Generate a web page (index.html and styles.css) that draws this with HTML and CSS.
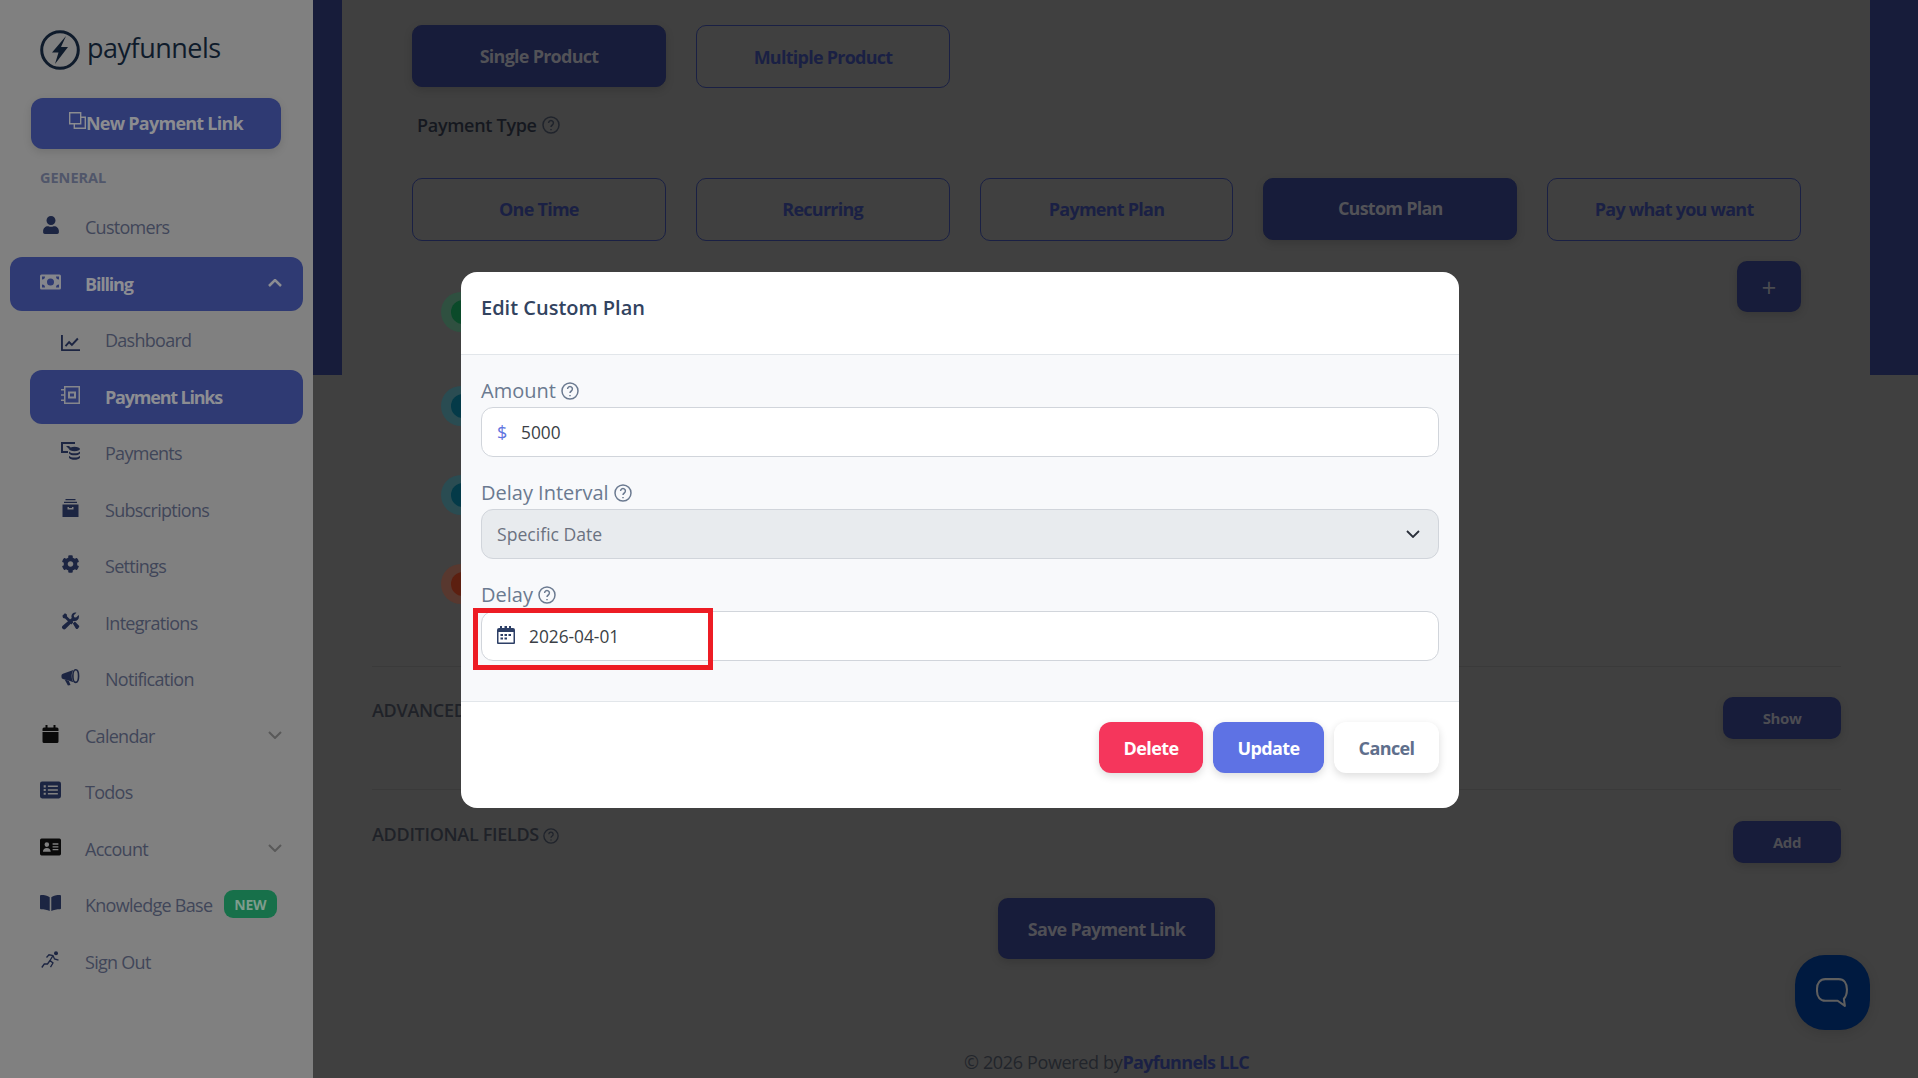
FILE: index.html
```html
<!DOCTYPE html>
<html lang="en">
<head>
<meta charset="utf-8">
<title>Payfunnels - Edit Custom Plan</title>
<link rel="stylesheet" href="styles.css">
</head>
<body>
<svg class="sprite" aria-hidden="true">
  <symbol id="i-user" viewBox="0 0 448 512"><path d="M224 256c70.700 0 128-57.300 128-128S294.700 0 224 0 96 57.300 96 128s57.300 128 128 128zm89.600 32h-16.700c-22.200 10.200-46.900 16-72.900 16s-50.600-5.800-72.900-16h-16.700C60.200 288 0 348.200 0 422.400V464c0 26.500 21.500 48 48 48h352c26.500 0 48-21.500 48-48v-41.600c0-74.200-60.200-134.400-134.400-134.400z"/></symbol>
  <symbol id="i-money" viewBox="0 0 21 15"><path fill-rule="evenodd" d="M1.500 0h18A1.500 1.500 0 0 1 21 1.500v12a1.500 1.500 0 0 1-1.500 1.500h-18A1.500 1.500 0 0 1 0 13.500v-12A1.500 1.500 0 0 1 1.500 0zM10.500 4a3.500 3.500 0 1 0 0 7 3.500 3.500 0 0 0 0-7zM2 2v3a3 3 0 0 0 3-3zm14 0a3 3 0 0 0 3 3V2zM2 10v3h3a3 3 0 0 0-3-3zm17 0a3 3 0 0 0-3 3h3z"/></symbol>
  <symbol id="i-chart" viewBox="0 0 20 17"><path d="M0 0h2v15h18v2H1a1 1 0 0 1-1-1z"/><path d="M4 11l4.500-5 3 3L17 3l1.500 1.500L11.500 12l-3-3-3 3.500z"/></symbol>
  <symbol id="i-book" viewBox="0 0 19 18"><path fill-rule="evenodd" d="M3 0h16v18H3v-3H0v-1.500h3v-3.750H0v-1.500h3V4.500H0V3h3zm1.500 1.500v15h13v-15zM7 5.500h8v7H7zm2 2v3h4v-3z"/></symbol>
  <symbol id="i-pay" viewBox="0 0 19 18"><path d="M0 0h14v2H2v7h5v2H0z"/><path d="M5 4l3 0 2 2-2 1z"/><ellipse cx="13.500" cy="7" rx="5.500" ry="2.200"/><path d="M8 9.500c1 1.300 3.200 1.800 5.500 1.800s4.500-.5 5.500-1.800v2c-1 1.300-3.200 1.800-5.500 1.800S9 12.800 8 11.500z"/><path d="M8 13.800c1 1.300 3.200 1.800 5.500 1.800s4.500-.5 5.500-1.800v1.900c-1 1.500-3.200 2.100-5.500 2.100S9 17.200 8 15.700z"/></symbol>
  <symbol id="i-archive" viewBox="0 0 16 18"><path fill-rule="evenodd" d="M3 0h10v1.200H3zM1.500 2.700h13v1.200h-13zM0 5.500h16V18H0zM5 8v2.500h6V8H9.500v1h-3V8z"/></symbol>
  <symbol id="i-cog" viewBox="0 0 512 512"><path d="M487.400 315.700l-42.600-24.600c4.300-23.200 4.300-47 0-70.200l42.600-24.600c4.900-2.800 7.100-8.600 5.500-14-11.100-35.600-30-67.800-54.700-94.600-3.800-4.100-10-5.100-14.800-2.300L380.800 110c-17.900-15.400-38.500-27.300-60.800-35.100V25.800c0-5.600-3.900-10.500-9.400-11.700-36.700-8.200-74.300-7.800-109.200 0-5.500 1.200-9.400 6.100-9.400 11.700V75c-22.200 7.900-42.800 19.800-60.800 35.100L88.700 85.500c-4.900-2.800-11-1.900-14.800 2.300-24.700 26.700-43.600 58.900-54.700 94.600-1.700 5.400.6 11.200 5.500 14L67.300 221c-4.300 23.200-4.300 47 0 70.200l-42.600 24.600c-4.900 2.800-7.100 8.600-5.500 14 11.100 35.600 30 67.800 54.700 94.600 3.800 4.100 10 5.100 14.800 2.300l42.600-24.600c17.900 15.400 38.500 27.300 60.800 35.100v49.200c0 5.600 3.900 10.500 9.400 11.700 36.700 8.200 74.300 7.800 109.200 0 5.500-1.200 9.400-6.100 9.400-11.700v-49.200c22.200-7.900 42.800-19.800 60.800-35.100l42.600 24.600c4.900 2.800 11 1.900 14.800-2.300 24.700-26.700 43.600-58.900 54.700-94.600 1.500-5.500-.7-11.300-5.600-14.100zM256 336c-44.100 0-80-35.900-80-80s35.900-80 80-80 80 35.900 80 80-35.900 80-80 80z"/></symbol>
  <symbol id="i-tools" viewBox="0 0 20 20"><path d="M1 4.200L3.800 1.400l2 1.200.4 2.300 6.900 6.900-2.200 2.200-6.900-6.900-2.300-.4z"/><path d="M19.200 3.200l-3 3-2.200-.3-.4-2.200 3-3c-2.600-.9-5.800 1-5.600 4.300 0 .6.200 1.200.4 1.700L1.300 15.300a2.300 2.300 0 0 0 3.300 3.300l8.700-8.700c3.700 1.100 7-2.300 5.900-6.700z"/><path d="M12.600 12.900l2.300-2.300 4.300 4.300a1.700 1.700 0 0 1 0 2.400l-.9.900a1.700 1.700 0 0 1-2.400 0z"/></symbol>
  <symbol id="i-horn" viewBox="0 0 20 18"><path d="M.5 7.500a2 2 0 0 1 1.500-2L13 1.500c-1.200 2-1.800 4.200-1.800 6.500s.6 4.500 1.800 6.500l-5-1.800-6-1.700a2 2 0 0 1-1.500-2z"/><path d="M3.800 11.500l4.400 1.500 1.800 4.300-2.700.7z"/><ellipse cx="15.500" cy="8" rx="3" ry="6.700" fill="none" stroke="currentColor" stroke-width="1.700"/></symbol>
  <symbol id="i-cal" viewBox="0 0 16 18"><path d="M3 0h2v2.500h6V0h2v2.500h1.500A1.500 1.500 0 0 1 16 4v2H0V4a1.500 1.500 0 0 1 1.500-1.500H3zM0 7h16v9.500a1.500 1.500 0 0 1-1.500 1.500h-13A1.500 1.500 0 0 1 0 16.500z"/></symbol>
  <symbol id="i-list" viewBox="0 0 20 16"><path fill-rule="evenodd" d="M2 0h16a2 2 0 0 1 2 2v12a2 2 0 0 1-2 2H2a2 2 0 0 1-2-2V2a2 2 0 0 1 2-2zM3.500 3.500v2h2v-2zm4 .3v1.400H17V3.800zM3.500 7v2h2V7zm4 .3v1.400H17V7.300zm-4 3.200v2h2v-2zm4 .3v1.400H17v-1.400z"/></symbol>
  <symbol id="i-id" viewBox="0 0 20 16"><path fill-rule="evenodd" d="M1.500 0h17A1.500 1.500 0 0 1 20 1.500v13a1.500 1.500 0 0 1-1.500 1.500h-17A1.500 1.500 0 0 1 0 14.500v-13A1.500 1.500 0 0 1 1.500 0zM6.500 3.500a2.200 2.200 0 1 0 0 4.400 2.200 2.200 0 0 0 0-4.400zM2.800 12.500h7.400c0-2-1.500-3.600-3.700-3.600s-3.700 1.600-3.700 3.600zM12 4.500v1.300h5.500V4.500zM12 7.200v1.300h5.500V7.200zM12 9.900v1.300h5.500V9.900z"/></symbol>
  <symbol id="i-open" viewBox="0 0 21 16"><path d="M1 0c3.500 0 6.700.6 8.700 2.300V16C7.500 14.800 4 14.300 1 14.300a1 1 0 0 1-1-1V1a1 1 0 0 1 1-1zM20 0c-3.500 0-6.700.6-8.700 2.300V16c2.200-1.200 5.700-1.700 8.700-1.700a1 1 0 0 0 1-1V1a1 1 0 0 0-1-1z"/></symbol>
  <symbol id="i-run" viewBox="0 0 19 18"><circle cx="15" cy="2.200" r="2"/><path d="M5.500 6.500L8 3.800l4 .8 1.500 3.400 4 1.100M12 4.600L9 9.500l3 2.500-2.500 4.200M9 9.500L6.500 13H3.300L.8 16.500" fill="none" stroke="currentColor" stroke-width="1.300"/></symbol>
  <symbol id="i-copy" viewBox="0 0 17 17"><path d="M.7.700h11v11H.7zM5.300 11.700v4.600h11v-11h-4.600" fill="none" stroke="currentColor" stroke-width="1.400"/></symbol>
  <symbol id="i-date" viewBox="0 0 18 18"><path fill-rule="evenodd" d="M3 0h2v2h2.500V0h2.500v2h2V0h2v2h2a2 2 0 0 1 2 2v13a1 1 0 0 1-1 1H1a1 1 0 0 1-1-1V4a2 2 0 0 1 2-2h1zM1.500 6v10.500h15V6zM3.500 8h2.500v2H3.500zM7.500 8h2.500v2H7.500zM11.500 8h2.500v2h-2.500zM3.500 11.500h2.500v2H3.500zM7.500 11.500h2.500v2H7.500z"/></symbol>
  <symbol id="i-help" viewBox="0 0 18 18"><circle cx="9" cy="9" r="8"/><path d="M6.600 7a2.400 2.400 0 1 1 3.700 2c-.9.600-1.300 1-1.300 2"/><path d="M9 13v1.200"/></symbol>
</svg>

<aside class="sidebar">
  <div class="logo">
    <svg class="logo-mark" viewBox="0 0 40 40"><circle cx="20" cy="20" r="18.300" fill="none" stroke="currentColor" stroke-width="3"/><path d="M26 6L12 22.500h6.500L15 34l13-17h-7z" fill="currentColor"/></svg>
    <span class="logo-text">payfunnels</span>
  </div>
  <div class="new-link"><svg class="copy-icon"><use href="#i-copy"/></svg>New Payment Link</div>
  <div class="nav-heading">GENERAL</div>
  <nav class="nav">
    <div class="nav-row"><svg class="ic ic-user"><use href="#i-user"/></svg>Customers</div>
    <div class="nav-row is-active"><svg class="ic"><use href="#i-money"/></svg>Billing<svg class="chev" viewBox="0 0 14 8"><path d="M1 7l6-6 6 6"/></svg></div>
    <div class="nav-row is-sub"><svg class="ic ic-low"><use href="#i-chart"/></svg>Dashboard</div>
    <div class="nav-row is-sub is-active"><svg class="ic"><use href="#i-book"/></svg>Payment Links</div>
    <div class="nav-row is-sub"><svg class="ic"><use href="#i-pay"/></svg>Payments</div>
    <div class="nav-row is-sub"><svg class="ic"><use href="#i-archive"/></svg>Subscriptions</div>
    <div class="nav-row is-sub"><svg class="ic"><use href="#i-cog"/></svg>Settings</div>
    <div class="nav-row is-sub"><svg class="ic"><use href="#i-tools"/></svg>Integrations</div>
    <div class="nav-row is-sub"><svg class="ic"><use href="#i-horn"/></svg>Notification</div>
    <div class="nav-row"><svg class="ic ic-black"><use href="#i-cal"/></svg>Calendar<svg class="chev" viewBox="0 0 14 8"><path d="M1 1l6 6 6-6"/></svg></div>
    <div class="nav-row"><svg class="ic"><use href="#i-list"/></svg>Todos</div>
    <div class="nav-row"><svg class="ic ic-black"><use href="#i-id"/></svg>Account<svg class="chev" viewBox="0 0 14 8"><path d="M1 1l6 6 6-6"/></svg></div>
    <div class="nav-row"><svg class="ic"><use href="#i-open"/></svg>Knowledge Base<span class="badge">NEW</span></div>
    <div class="nav-row"><svg class="ic"><use href="#i-run"/></svg>Sign Out</div>
  </nav>
</aside>

<main class="main">
  <div class="card">
    <section class="builder">
      <div class="btn-row btn-row-product">
        <div class="tile is-on">Single Product</div>
        <div class="tile">Multiple Product</div>
      </div>
      <div class="type-label">Payment Type <svg class="help help-dark"><use href="#i-help"/></svg></div>
      <div class="btn-row btn-row-plan">
        <div class="tile">One Time</div>
        <div class="tile">Recurring</div>
        <div class="tile">Payment Plan</div>
        <div class="tile is-on">Custom Plan</div>
        <div class="tile">Pay what you want</div>
      </div>
      <div class="plans">
        <div class="steps">
          <span class="step step-green"></span>
          <span class="step step-teal step-far"></span>
          <span class="step step-teal"></span>
          <span class="step step-red"></span>
        </div>
        <div class="plus">+</div>
      </div>
    </section>
    <section class="panel">
      <span class="panel-title">ADVANCED</span>
      <div class="mini mini-show">Show</div>
    </section>
    <section class="panel">
      <span class="panel-title">ADDITIONAL FIELDS <svg class="help help-dark help-small"><use href="#i-help"/></svg></span>
      <div class="mini mini-add">Add</div>
    </section>
    <div class="save">Save Payment Link</div>
    <footer class="foot">© 2026 Powered by<strong>Payfunnels LLC</strong></footer>
  </div>
</main>

<div class="chat"><svg viewBox="0 0 32 30"><path d="M9 2h13c5 0 8 4 8 10 0 4-1 7-3 9l1 7-7-5H9c-5 0-8-4-8-9v-3c0-5 3-9 8-9z"/></svg></div>

<div class="modal">
  <header class="modal-head">Edit Custom Plan</header>
  <div class="modal-body">
    <div class="field">
      <label class="field-label">Amount <svg class="help"><use href="#i-help"/></svg></label>
      <div class="control"><span class="dollar">$</span>5000</div>
    </div>
    <div class="field">
      <label class="field-label">Delay Interval <svg class="help"><use href="#i-help"/></svg></label>
      <div class="control control-select">Specific Date<svg class="select-chev" viewBox="0 0 14 8"><path d="M1 1l6 6 6-6"/></svg></div>
    </div>
    <div class="field">
      <label class="field-label">Delay <svg class="help"><use href="#i-help"/></svg></label>
      <div class="control"><svg class="date-icon"><use href="#i-date"/></svg>2026-04-01</div>
    </div>
  </div>
  <footer class="modal-foot">
    <div class="act act-delete">Delete</div>
    <div class="act act-update">Update</div>
    <div class="act act-cancel">Cancel</div>
  </footer>
  <div class="highlight"></div>
</div>
</body>
</html>
```

FILE: styles.css
```css
* { box-sizing: border-box; }
html, body { margin: 0; height: 100%; }
body {
  position: relative;
  display: flex;
  width: 1918px;
  height: 1078px;
  overflow: hidden;
  background: #404040;
  font-family: "Open Sans", sans-serif;
}
.sprite { position: absolute; width: 0; height: 0; }

/* Sidebar */
.sidebar {
  flex: 0 0 313px;
  background: #808080;
  padding: 30px 10px 0;
  color: #404659;
}
.logo { display: flex; align-items: center; height: 40px; margin-left: 30px; color: #0f1b2b; }
.logo-mark { width: 40px; height: 40px; }
.logo-text { margin-left: 7px; margin-top: -6px; font-size: 27px; font-weight: 400; letter-spacing: -.5px; }
.new-link {
  display: flex; align-items: center; justify-content: center;
  width: 250px; height: 51px; margin: 28px 0 0 21px;
  padding-bottom: 1px;
  border-radius: 12px;
  background: #2f3a73;
  color: #8b8c90;
  font-size: 18px; font-weight: 700; letter-spacing: -.75px;
  box-shadow: 0 3px 8px rgba(0,0,0,.12);
}
.copy-icon { width: 17px; height: 17px; margin-top: -5px; }
.nav-heading { height: 19px; margin: 19px 0 13px 30px; color: #50566a; font-size: 14.500px; font-weight: 700; line-height: 19px; }
.nav { display: flex; flex-direction: column; gap: 2.500px; }
.nav-row {
  position: relative;
  display: flex; align-items: center;
  height: 54px;
  padding-left: 30px;
  border-radius: 12px;
  font-size: 18px; letter-spacing: -.72px;
}
.nav-row.is-sub { margin-left: 20px; }
.nav-row.is-active { background: #2f3a73; color: #8c8d92; font-weight: 700; letter-spacing: -1.200px; }
.ic { flex: none; width: 21px; height: 18px; margin: -4px 24px 0 0; fill: #1c2542; color: #1c2542; }
.is-active .ic { fill: #85868c; color: #85868c; }
.is-sub .ic { margin-right: 25px; margin-left: 1px; width: 19px; }
.is-sub .ic-low { margin-top: 5px; }
.ic-user { width: 16px; margin-left: 3px; margin-right: 26px; }
.ic-black { fill: #0a0a0a; }
.chev { position: absolute; right: 21px; top: 22px; width: 14px; height: 8px; fill: none; stroke: #595959; stroke-width: 2; }
.is-active .chev { stroke: #8c8d92; stroke-width: 2.500; }
.badge {
  display: flex; align-items: center; justify-content: center;
  width: 53px; height: 28px; margin-left: 11.500px; margin-top: -2px;
  border-radius: 9px;
  background: #17704a; color: #7e9c8d;
  font-size: 14px; font-weight: 700; letter-spacing: -.2px;
}

/* Main area */
.main {
  flex: 1;
  padding: 0 48px 0 29px;
  background: linear-gradient(#171c3a, #171c3a) no-repeat top / 100% 375px, #404040;
}
.card { height: 100%; padding: 0 29px 0 30px; background: #404040; }
.builder { height: 666px; padding: 25px 40px 0; overflow: hidden; }
.btn-row { display: flex; gap: 30px; }
.btn-row .tile { flex: 1; }
.btn-row-product .tile { flex: 0 0 254px; }
.btn-row-plan .tile { padding-bottom: 2px; }
.tile {
  display: flex; align-items: center; justify-content: center;
  height: 63px;
  border: 1px solid #1a2044; border-radius: 10px;
  color: #1a2044;
  font-size: 18px; font-weight: 700; letter-spacing: -.75px;
}
.tile.is-on { height: 62px; border-color: #171c3a; background: #171c3a; color: #525257; box-shadow: 0 3px 8px rgba(0,0,0,.15); }
.type-label {
  display: flex; align-items: center; gap: 5px;
  height: 26px; margin: 24px 0 40px 5px;
  color: #15181f; font-size: 18px; font-weight: 600; letter-spacing: -.3px;
}
.help { width: 18px; height: 18px; fill: none; stroke: #6b7a90; stroke-width: 1.500; vertical-align: -3px; }
.help-dark { stroke: #20242c; }
.help-small { width: 16px; height: 16px; }
.plans { display: flex; justify-content: space-between; height: 426px; margin-top: 20px; }
.steps { display: flex; flex-direction: column; gap: 49px; padding: 31px 0 0 29px; }
.step { position: relative; display: block; width: 40px; height: 40px; border-radius: 50%; }
.step::after { content: ""; position: absolute; left: 10px; top: 8px; width: 24px; height: 24px; border-radius: 50%; }
.step-green { background: #2f5040; }
.step-green::after { background: #0b4a2a; }
.step-teal { background: #2a4c52; }
.step-teal::after { background: #043a48; }
.step-far { margin-top: 5px; }
.step-red { background: #58382f; }
.step-red::after { background: #5c1f10; }
.plus {
  display: flex; align-items: center; justify-content: center;
  width: 64px; height: 51px;
  border-radius: 10px;
  background: #171c3a; color: #4a4b50;
  font-size: 26px; font-weight: 400;
  box-shadow: 0 3px 8px rgba(0,0,0,.15);
}
.panel {
  display: flex; justify-content: space-between; align-items: flex-start;
  height: 123px;
  padding-top: 30px;
  border-top: 1px solid #3a3a3a;
}
.panel + .panel { padding-top: 31px; }
.panel-title { margin-top: 1px; color: #1f2228; font-size: 18px; font-weight: 600; letter-spacing: -.3px; line-height: 24px; }
.mini {
  display: flex; align-items: center; justify-content: center;
  height: 42px;
  border-radius: 10px;
  background: #171c3a; color: #4c4c52;
  font-size: 15px; font-weight: 700; letter-spacing: -.4px;
  box-shadow: 0 3px 8px rgba(0,0,0,.15);
}
.mini-show { width: 118px; }
.mini-add { width: 108px; }
.save {
  display: flex; align-items: center; justify-content: center;
  width: 217px; height: 61px; margin: -14px auto 0;
  border-radius: 10px;
  background: #171c3a; color: #4f4f55;
  font-size: 18px; font-weight: 700; letter-spacing: -.75px;
  box-shadow: 0 3px 8px rgba(0,0,0,.15);
}
.foot { margin-top: 90px; color: #22252b; font-size: 18px; letter-spacing: -.35px; line-height: 26px; text-align: center; }
.foot strong { color: #1a2044; font-weight: 700; letter-spacing: -.7px; }

/* Chat launcher */
.chat {
  position: absolute; left: 1795px; top: 955px;
  display: flex; align-items: center; justify-content: center;
  width: 75px; height: 75px;
  border-radius: 30px;
  background: #001a40;
  box-shadow: 0 3px 12px rgba(0,0,0,.12);
}
.chat svg { width: 33px; height: 31px; fill: none; stroke: #5f5f5f; stroke-width: 2; stroke-linejoin: round; }

/* Modal */
.modal {
  position: absolute; left: 461px; top: 272px;
  display: flex; flex-direction: column;
  width: 998px; height: 536px;
  border-radius: 16px;
  background: #fff;
  overflow: hidden;
}
.modal-head {
  flex: 0 0 83px;
  padding: 22px 20px 0;
  border-bottom: 1px solid #e2e6ea;
  color: #32435f;
  font-size: 20px; font-weight: 600; line-height: 28px;
}
.modal-body { flex: 0 0 347px; padding: 20px 20px 0; background: #f8f9fb; border-bottom: 1px solid #e2e6ea; }
.field { height: 102px; }
.field-label {
  display: flex; align-items: center; gap: 5px;
  height: 32px;
  color: #6b7a90; font-size: 20px; line-height: 30px;
}
.control {
  position: relative;
  display: flex; align-items: center;
  height: 50px;
  padding: 0 15px;
  border: 1px solid #d1d5db; border-radius: 12px;
  background: #fff;
  color: #3b3f46; font-size: 17.300px;
}
.control-select { background: #e8ebee; color: #6b7280; font-size: 17.600px; }
.select-chev { position: absolute; right: 18px; top: 20px; width: 14px; height: 8px; fill: none; stroke: #2a2f3a; stroke-width: 1.800; }
.dollar { width: 24px; color: #5f74e0; font-size: 18px; }
.date-icon { width: 18px; height: 18px; margin: -2px 14px 0 0; fill: #2d3f66; }
.modal-foot { flex: 1; display: flex; justify-content: flex-end; gap: 10px; padding: 20px 20px 0; }
.act {
  display: flex; align-items: center; justify-content: center;
  height: 51px;
  border-radius: 12px;
  font-size: 18px; font-weight: 700; letter-spacing: -.6px;
  box-shadow: 0 3px 8px rgba(0,0,0,.14);
}
.act-delete { width: 104px; background: #f5365c; color: #fff; }
.act-update { width: 111px; background: #5e72e4; color: #fff; }
.act-cancel { width: 105px; background: #fff; color: #5f6f8c; }
.highlight {
  position: absolute; left: 12px; top: 336px;
  width: 240px; height: 62px;
  border: 5px solid #ed1c24;
  pointer-events: none;
}
```
